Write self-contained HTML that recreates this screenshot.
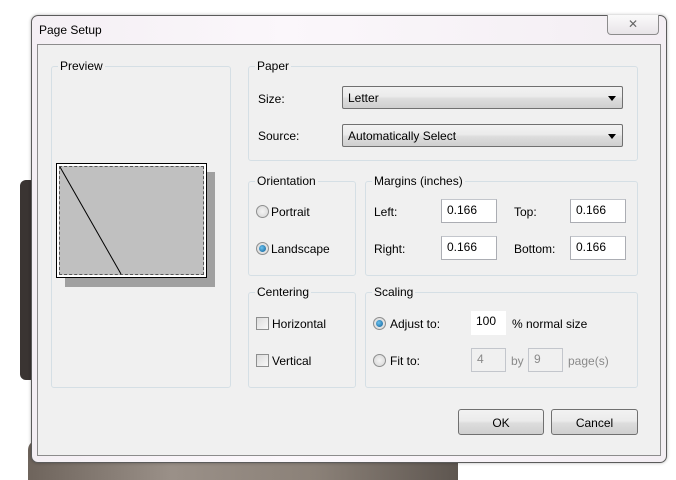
<!DOCTYPE html>
<html><head><style>
*{box-sizing:border-box;margin:0;padding:0}
body{width:676px;height:473px;background:#fff;position:relative;overflow:hidden;font-family:"Liberation Sans",sans-serif;font-size:12px;color:#000}
.a{position:absolute}
.grp{position:absolute;border:1px solid #d5dfe5;border-radius:3px}
.lg{position:absolute;top:-8px;left:6px;background:#f0f0f0;padding:0 2px;white-space:nowrap}
.t{position:absolute;white-space:nowrap}
.inp{position:absolute;background:#fff;border:1px solid #abadb3;border-top-color:#c3c6cc;height:24px;padding:3px 0 0 5px}
.dis{background:#f0f0f0;color:#8a8a8a;border-color:#c3c6cc}
.sel{position:absolute;height:23px;border:1px solid #707070;border-radius:2px;background:linear-gradient(#f2f2f2 0,#ebebeb 45%,#dddddd 55%,#cfcfcf);padding:4px 0 0 5px}
.sel:after{content:"";position:absolute;right:6px;top:9px;border-left:4px solid transparent;border-right:4px solid transparent;border-top:5px solid #000}
.rad{position:absolute;width:13px;height:13px;border-radius:50%;border:1px solid #8e8f8f;background:radial-gradient(#f4f4f4,#d4d4d4)}
.rad.on:after{content:"";position:absolute;left:2px;top:2px;width:7px;height:7px;border-radius:50%;background:radial-gradient(circle at 40% 40%,#6cc3ef,#0b5b95)}
.chk{position:absolute;width:13px;height:13px;border:1px solid #8e8f8f;background:linear-gradient(135deg,#dcdcdc,#f8f8f8)}
.btn{position:absolute;height:26px;border:1px solid #707070;border-radius:3px;background:linear-gradient(#f2f2f2 0,#ebebeb 45%,#dddddd 55%,#cfcfcf);text-align:center;padding-top:6px}
</style></head><body>
<!-- background rock -->
<div class="a" style="left:20px;top:180px;width:16px;height:200px;background:#3a3432;border-radius:6px"></div>
<div class="a" style="left:28px;top:440px;width:430px;height:40px;background:linear-gradient(90deg,#6e645c,#9a9088,#8b8178,#5e5650);border-radius:10px 10px 0 0"></div>
<!-- window -->
<div class="a" style="left:31px;top:15px;width:636px;height:448px;background:linear-gradient(90deg,#f4eff4,#fbf7fb 40%,#f3eef3);border:1px solid #5b5b5b;border-radius:7px;box-shadow:0 0 3px rgba(0,0,0,.3)"></div>
<div class="t" style="left:39px;top:23px;font-size:12px">Page Setup</div>
<div class="a" style="left:607px;top:15px;width:52px;height:20px;border:1px solid #8c8c8c;border-top:none;border-radius:0 0 4px 4px;background:linear-gradient(#fafafa,#e8e4e8);text-align:center;color:#666;font-size:12px;line-height:18px">✕</div>
<div class="a" style="left:37px;top:44px;width:624px;height:412px;background:#f0f0f0;border:1px solid #8c8c8c"></div>

<!-- Preview -->
<div class="grp" style="left:51px;top:66px;width:180px;height:322px"><span class="lg">Preview</span></div>
<div class="a" style="left:65px;top:172px;width:150px;height:115px;background:#a0a0a0"></div>
<div class="a" style="left:56px;top:163px;width:151px;height:115px;background:#fff;border:1px solid #000"></div>
<div class="a" style="left:59px;top:166px;width:145px;height:109px;background:#c0c0c0;border:1px dashed #555"></div>
<svg class="a" style="left:0;top:0" width="676" height="473"><line x1="60" y1="167" x2="121" y2="274" stroke="#000" stroke-width="1"/></svg>

<!-- Paper -->
<div class="grp" style="left:248px;top:66px;width:390px;height:95px"><span class="lg">Paper</span></div>
<div class="t" style="left:258px;top:92px">Size:</div>
<div class="sel" style="left:342px;top:86px;width:281px">Letter</div>
<div class="t" style="left:258px;top:129px">Source:</div>
<div class="sel" style="left:342px;top:124px;width:281px">Automatically Select</div>

<!-- Orientation -->
<div class="grp" style="left:248px;top:181px;width:108px;height:95px"><span class="lg">Orientation</span></div>
<div class="rad" style="left:256px;top:205px"></div><div class="t" style="left:271px;top:205px">Portrait</div>
<div class="rad on" style="left:256px;top:242px"></div><div class="t" style="left:271px;top:242px">Landscape</div>

<!-- Margins -->
<div class="grp" style="left:365px;top:181px;width:273px;height:95px"><span class="lg">Margins (inches)</span></div>
<div class="t" style="left:374px;top:205px">Left:</div>
<div class="inp" style="left:441px;top:199px;width:56px">0.166</div>
<div class="t" style="left:514px;top:205px">Top:</div>
<div class="inp" style="left:570px;top:199px;width:56px">0.166</div>
<div class="t" style="left:374px;top:242px">Right:</div>
<div class="inp" style="left:441px;top:236px;width:56px">0.166</div>
<div class="t" style="left:514px;top:242px">Bottom:</div>
<div class="inp" style="left:570px;top:236px;width:56px">0.166</div>

<!-- Centering -->
<div class="grp" style="left:248px;top:292px;width:108px;height:96px"><span class="lg">Centering</span></div>
<div class="chk" style="left:256px;top:317px"></div><div class="t" style="left:272px;top:317px">Horizontal</div>
<div class="chk" style="left:256px;top:354px"></div><div class="t" style="left:272px;top:354px">Vertical</div>

<!-- Scaling -->
<div class="grp" style="left:365px;top:292px;width:273px;height:96px"><span class="lg">Scaling</span></div>
<div class="rad on" style="left:373px;top:317px"></div><div class="t" style="left:390px;top:317px">Adjust to:</div>
<div class="inp" style="left:471px;top:311px;width:35px;border:none">100</div>
<div class="t" style="left:512px;top:317px">% normal size</div>
<div class="rad" style="left:373px;top:354px"></div><div class="t" style="left:390px;top:354px">Fit to:</div>
<div class="inp dis" style="left:471px;top:348px;width:35px">4</div>
<div class="t" style="left:511px;top:354px;color:#8a8a8a">by</div>
<div class="inp dis" style="left:528px;top:348px;width:35px">9</div>
<div class="t" style="left:568px;top:354px;color:#8a8a8a">page(s)</div>

<!-- Buttons -->
<div class="btn" style="left:458px;top:409px;width:86px">OK</div>
<div class="btn" style="left:551px;top:409px;width:87px">Cancel</div>
</body></html>
